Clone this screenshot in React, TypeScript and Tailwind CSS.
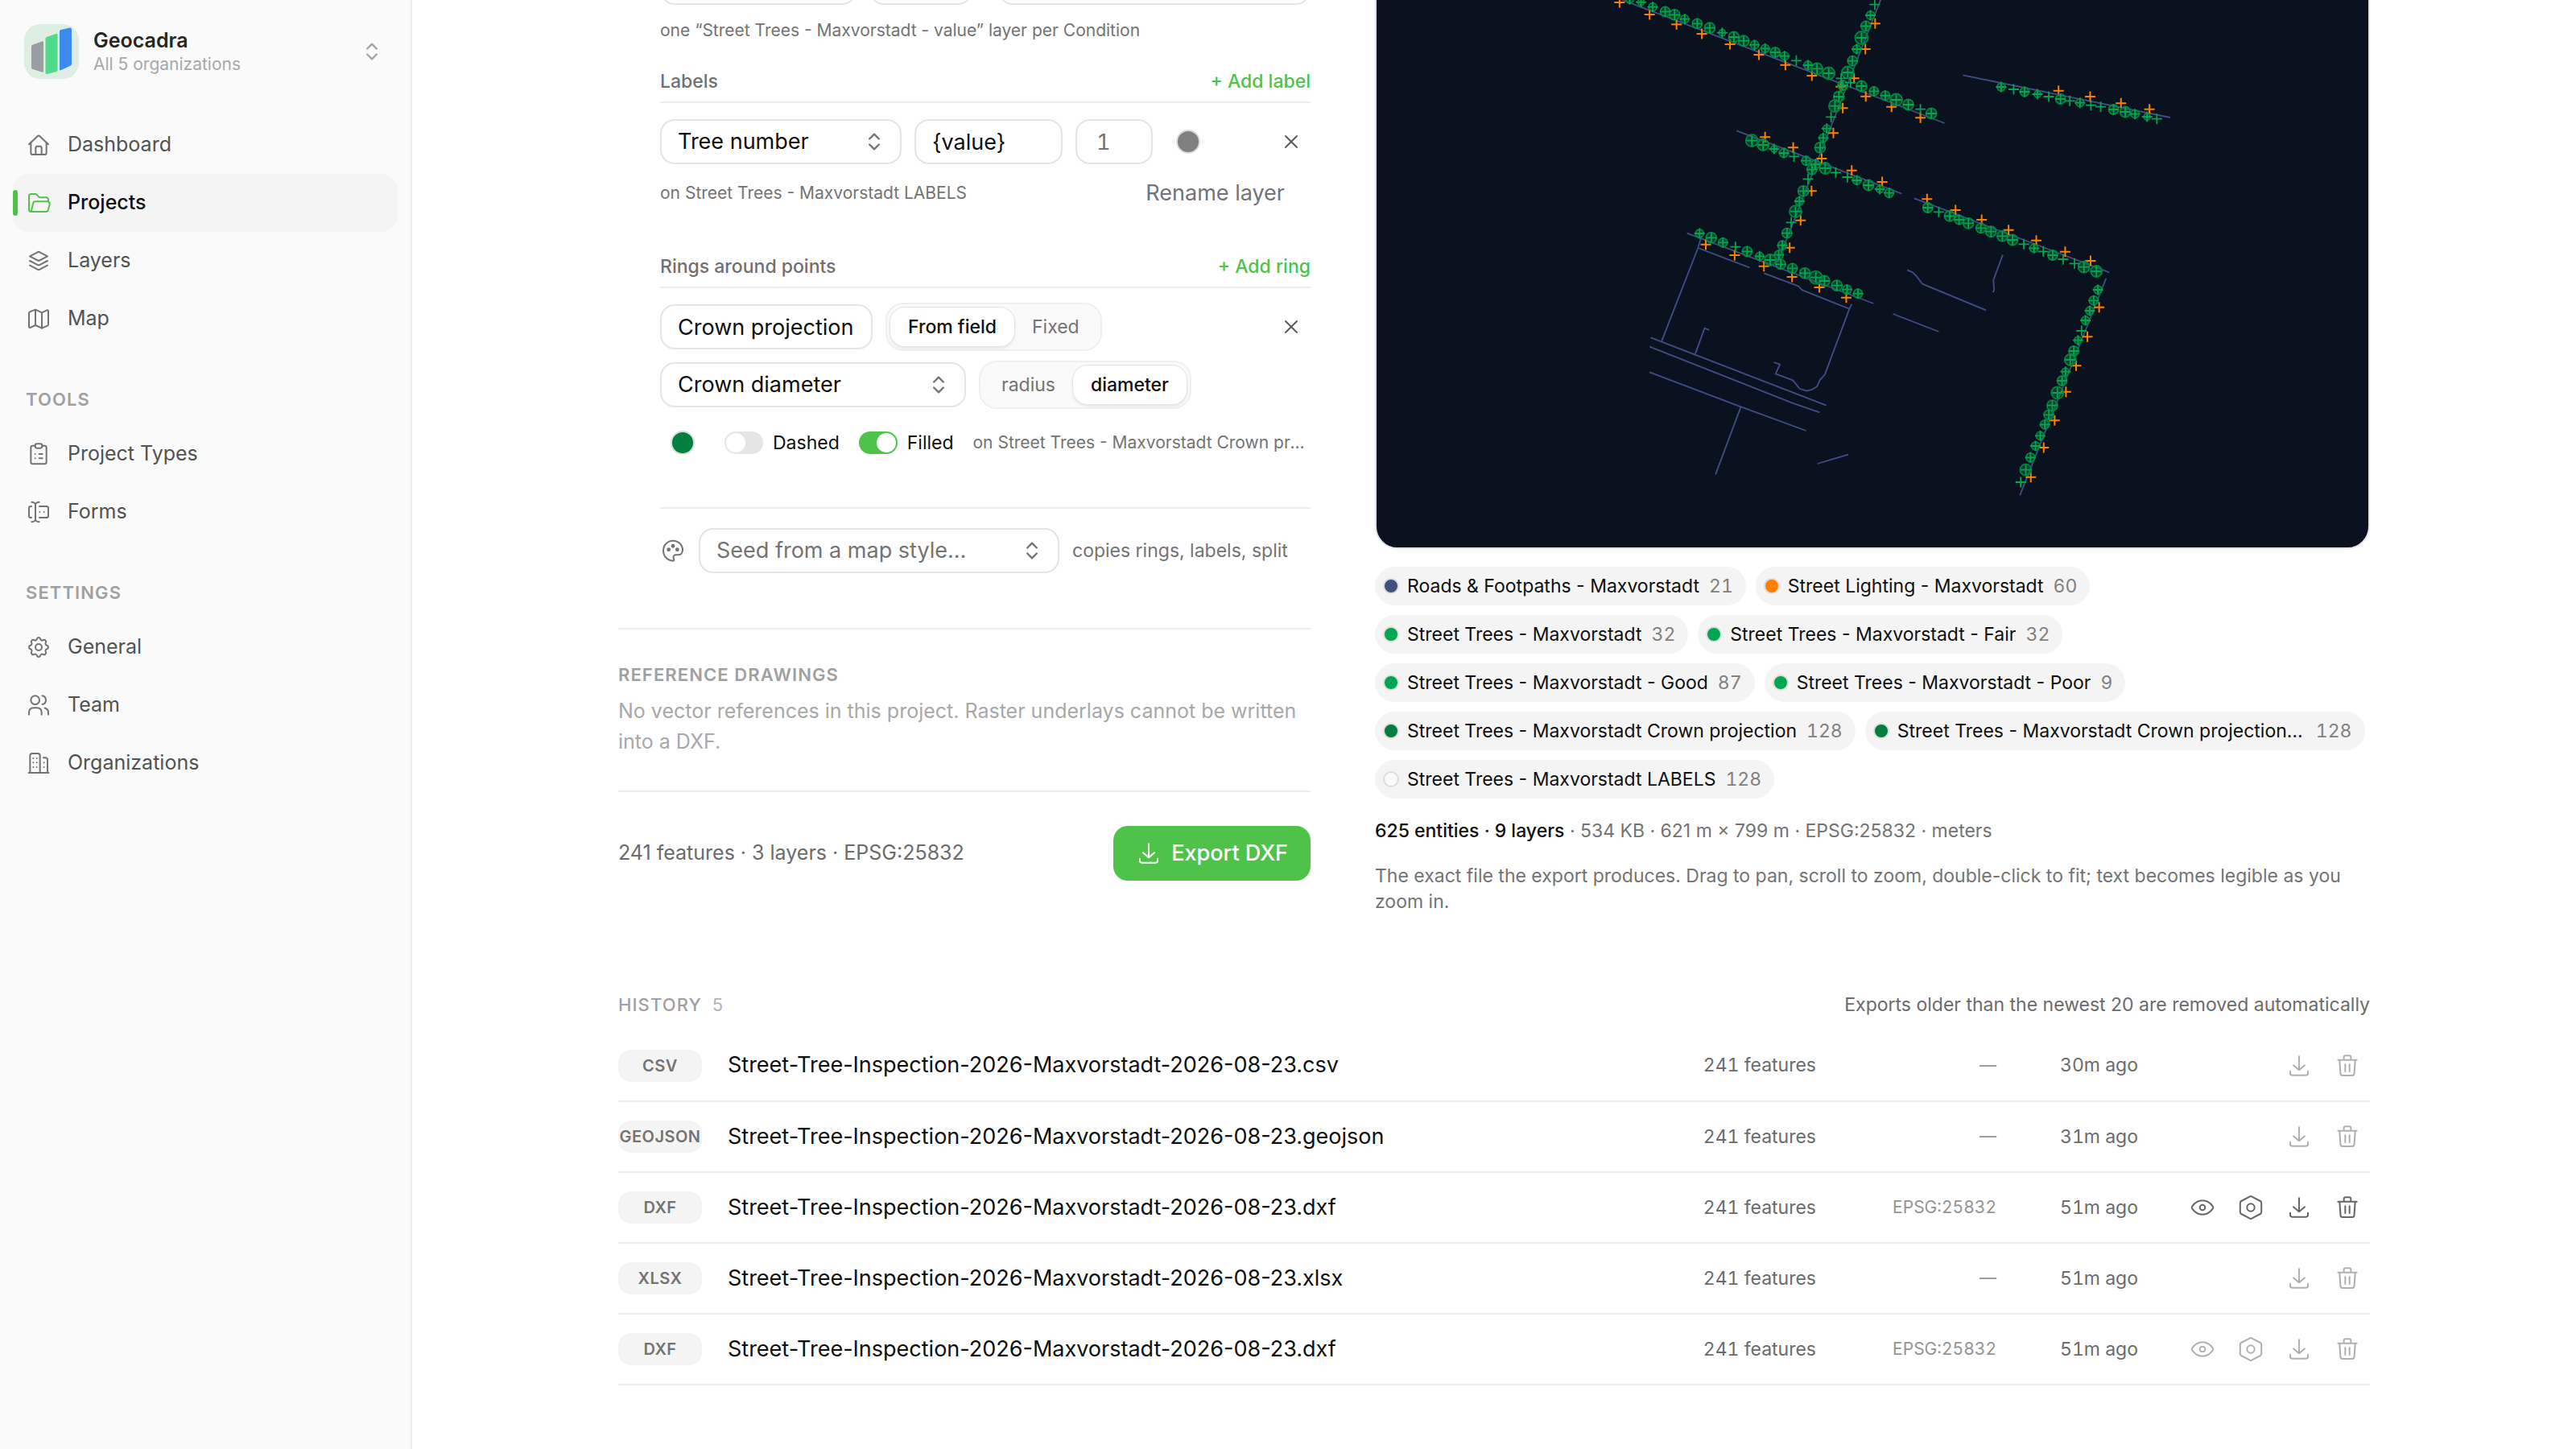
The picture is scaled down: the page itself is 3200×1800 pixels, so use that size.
import type { ReactNode } from "react";
import { ChevronsUpDown, X } from "lucide-react";
import { TbSettings } from "react-icons/tb";
import clsx from "clsx";

function Icon({
  children,
  className = "size-8",
}: {
  children: ReactNode;
  className?: string;
}) {
  return (
    <svg
      viewBox="0 0 24 24"
      fill="none"
      stroke="currentColor"
      strokeWidth={1.5}
      strokeLinecap="round"
      strokeLinejoin="round"
      className={clsx("shrink-0", className)}
      aria-hidden="true"
    >
      {children}
    </svg>
  );
}

const icons = {
  home: (
    <Icon>
      <path d="M3 11.5 10.9 3.9a1.6 1.6 0 0 1 2.2 0L21 11.5" />
      <path d="M4.75 10v9.25c0 1 .75 1.75 1.75 1.75h11c1 0 1.75-.75 1.75-1.75V10" />
      <path d="M9.25 21v-6c0-1 .75-1.75 1.75-1.75h2c1 0 1.75.75 1.75 1.75v6" />
    </Icon>
  ),
  folder: (
    <Icon>
      <path d="M21 10.75V9c0-1.1-.9-2-2-2h-5.5c-.6 0-1.1-.25-1.5-.7L10.3 4.5c-.4-.5-.9-.75-1.5-.75H5c-1.1 0-2 .9-2 2v12.5c0 1.1.9 2 2 2h13.9c.9 0 1.7-.6 1.95-1.5l1.4-5.5c.3-1.25-.6-2.5-1.95-2.5H8.9c-.9 0-1.7.6-1.95 1.5L5 20.2" />
    </Icon>
  ),
  layers: (
    <Icon>
      <path d="M12 3.5 20.25 7.75 12 12 3.75 7.75z" />
      <path d="M3.75 12 12 16.25 20.25 12" />
      <path d="M3.75 16.25 12 20.5l8.25-4.25" />
    </Icon>
  ),
  map: (
    <Icon>
      <path d="M3 7c0-.8.4-1.4 1.1-1.7L9 3.5l6 2.75 4.6-2.2c.7-.3 1.4.1 1.4.9V17c0 .8-.4 1.4-1.1 1.7L15 20.75 9 18l-4.6 2.2c-.7.3-1.4-.1-1.4-.9z" />
      <path d="M9 3.5V18M15 6.25v14.5" />
    </Icon>
  ),
  clipboard: (
    <Icon>
      <path d="M8.75 4.25H6.5c-1 0-1.75.75-1.75 1.75v13.5c0 1 .75 1.75 1.75 1.75h11c1 0 1.75-.75 1.75-1.75V6c0-1-.75-1.75-1.75-1.75h-2.25" />
      <rect x="8.75" y="2.5" width="6.5" height="4" rx="1.75" />
      <path d="M8.75 12h.01M8.75 16h.01M12.5 12h3M12.5 16h3" />
    </Icon>
  ),
  form: (
    <Icon>
      <path d="M9 5.5v13M5.5 2.75C7.5 2.75 9 3.9 9 5.5c0-1.6 1.5-2.75 3.5-2.75M5.5 21.25C7.5 21.25 9 20.1 9 18.5c0 1.6 1.5 2.75 3.5 2.75" />
      <path d="M5.25 6.75h-.5C3.75 6.75 3 7.5 3 8.5v7c0 1 .75 1.75 1.75 1.75h.5M12.75 6.75h6.5c1 0 1.75.75 1.75 1.75v7c0 1-.75 1.75-1.75 1.75h-6.5" />
      <path d="M13 12h.01M17 12h.01" />
    </Icon>
  ),
  team: (
    <Icon>
      <circle cx="8.75" cy="7.25" r="4" />
      <path d="M3 20.75V19c0-2.75 1.75-4.5 4.5-4.5h2.75c2.75 0 4.5 1.75 4.5 4.5v1.75" />
      <path d="M15.5 3.25a4.1 4.1 0 0 1 0 8M17.75 14.6c2 .5 3.25 2.1 3.25 4.4v1.75" />
    </Icon>
  ),
  building: (
    <Icon>
      <path d="M2.75 21h18.5M4 21V5c0-1.1.9-2 2-2h5.25c1.1 0 2 .9 2 2v16M16.5 7h1.75c1.1 0 2 .9 2 2v12" />
      <path d="M7 7.5h.01M10.25 7.5h.01M7 11.5h.01M10.25 11.5h.01M7 15.75h.01M10.25 15.75h.01M17 11.5h.01M17 15.75h.01" />
    </Icon>
  ),
  palette: (
    <Icon>
      <path d="M12 21.5c-5.1-.3-9-4.4-9-9.4C3 6.8 7 2.75 12 2.75s9 3.9 9 8.75c0 2.9-1.9 4.5-4.3 4.5h-1.9c-1.6 0-2.7 1.2-2.4 2.7l.5 1.6c.2.7-.2 1.2-.9 1.2z" />
      <circle cx="8" cy="11" r="1.1" fill="currentColor" />
      <circle cx="12" cy="7.75" r="1.1" fill="currentColor" />
      <circle cx="16" cy="11" r="1.1" fill="currentColor" />
    </Icon>
  ),
  download: (
    <Icon>
      <path d="M12 3.25V16M6.75 11.5 12 16l5.25-4.5" />
      <path d="M3.75 17v2c0 1 .75 1.75 1.75 1.75h13c1 0 1.75-.75 1.75-1.75v-2" />
    </Icon>
  ),
  trash: (
    <Icon>
      <path d="M3.25 6.5h17.5M8.75 6.25V4c0-.85.65-1.5 1.5-1.5h3.5c.85 0 1.5.65 1.5 1.5v2.25" />
      <path d="m4.75 6.75.85 12.5c.1 1 .9 1.75 1.9 1.75h9c1 0 1.8-.75 1.9-1.75l.85-12.5" />
      <path d="M10 10.75v6.5M14 10.75v6.5" />
    </Icon>
  ),
  eye: (
    <Icon>
      <path d="M21.6 11c.4.6.4 1.4 0 2-1.4 2-4.8 5.5-9.6 5.5S3.8 15 2.4 13c-.4-.6-.4-1.4 0-2C3.8 9 7.2 5.5 12 5.5s8.2 3.5 9.6 5.5z" />
      <circle cx="12" cy="12" r="2.5" />
    </Icon>
  ),
  hexagon: (
    <Icon>
      <path d="M11.2 1.7c.5-.25 1.1-.25 1.6 0l8.1 4.3c.65.35 1 .95 1 1.65v8.7c0 .7-.35 1.3-1 1.65l-8.1 4.3c-.5.25-1.1.25-1.6 0L3.1 18c-.65-.35-1-.95-1-1.65v-8.7c0-.7.35-1.3 1-1.65z" />
      <circle cx="12" cy="12" r="3.5" />
    </Icon>
  ),
};

const navGroups = [
  {
    title: "",
    items: [
      { label: "Dashboard", icon: icons.home },
      { label: "Projects", icon: icons.folder, active: true },
      { label: "Layers", icon: icons.layers },
      { label: "Map", icon: icons.map },
    ],
  },
  {
    title: "Tools",
    items: [
      { label: "Project Types", icon: icons.clipboard },
      { label: "Forms", icon: icons.form },
    ],
  },
  {
    title: "Settings",
    items: [
      {
        label: "General",
        icon: <TbSettings className="size-8 shrink-0 stroke-[1.5]" />,
      },
      { label: "Team", icon: icons.team },
      { label: "Organizations", icon: icons.building },
    ],
  },
];

function Logo() {
  return (
    <svg viewBox="0 0 68 68" className="size-[68px] shrink-0" aria-hidden="true">
      <rect width="68" height="68" rx="20" fill="#deeee2" />
      <path
        d="M11 25.5 22 21.5q2-.6 2 1.2v35.5q0 1.8-1.8 1.4L10.8 56Q9 55.5 9 54.2V27.2Q9 26 11 25.5z"
        fill="#9a9da1"
      />
      <path
        d="M28 16 39.500 12q2-.6 2 1.300V57q0 1.500-1.300 1.900L28.500 62Q26.500 62.500 26.500 60.500V18q0-1.500 1.500-2z"
        fill="#50db8a"
      />
      <path
        d="M45.500 7 56.500 4.500q2.500-.3 2.500 2v43q0 1.300-1.200 1.900L46 57q-2 .8-2-1.300V9q0-1.500 1.500-2z"
        fill="#3b8aee"
      />
    </svg>
  );
}

function Sidebar() {
  return (
    <aside className="w-[512px] shrink-0 border-r-2 border-[#ededed] bg-[#fafafa] px-4">
      <button
        type="button"
        className="flex w-full items-center gap-[18px] pt-[30px] pl-[14px] pr-[18px] text-left"
      >
        <Logo />
        <span className="min-w-0 flex-1">
          <span className="block text-[25px] leading-[32px] font-semibold text-[#262626]">
            Geocadra
          </span>
          <span className="block text-[21px] leading-[28px] text-[#a8a8a8]">
            All 5 organizations
          </span>
        </span>
        <ChevronsUpDown className="size-7 text-[#a3a3a3]" />
      </button>
      <nav className="mt-[46px]">
        {navGroups.map((group) => (
          <div key={group.title}>
            {group.title && (
              <h2 className="px-4 pt-12 pb-4 text-[22px] leading-[32px] font-semibold tracking-wider text-[#a0a0a0] uppercase">
                {group.title}
              </h2>
            )}
            {group.items.map((item) => {
              const active = "active" in item && item.active;
              return (
                <a
                  key={item.label}
                  href="#"
                  aria-current={active ? "page" : undefined}
                  className={clsx(
                    "relative flex h-[72px] items-center gap-5 rounded-[20px] px-4 text-[25px]",
                    active
                      ? "bg-[#f4f4f4] font-medium text-[#111]"
                      : "text-[#525252]",
                  )}
                >
                  {active && (
                    <span className="absolute top-5 left-0 h-8 w-1.5 rounded-full bg-[#4fc24a]" />
                  )}
                  <span className={active ? "text-[#4fc24a]" : "text-[#737373]"}>
                    {item.icon}
                  </span>
                  {item.label}
                </a>
              );
            })}
          </div>
        ))}
      </nav>
    </aside>
  );
}

const fieldClass =
  "h-14 w-full appearance-none rounded-[18px] border-2 border-[#e5e5e5] bg-white px-5 text-[27px] text-[#0f0f0f] outline-none placeholder:text-[#737373]";

function SelectField({
  label,
  value,
  muted,
  className,
}: {
  label: string;
  value: string;
  muted?: boolean;
  className?: string;
}) {
  return (
    <div className={clsx("relative", className)}>
      <select
        aria-label={label}
        className={clsx(fieldClass, muted && "text-[#737373]")}
      >
        <option>{value}</option>
      </select>
      <ChevronsUpDown className="pointer-events-none absolute top-[14px] right-5 size-7 text-[#737373]" />
    </div>
  );
}

function Segmented({
  name,
  options,
  value,
}: {
  name: string;
  options: string[];
  value: string;
}) {
  return (
    <div
      role="radiogroup"
      aria-label={name}
      className="flex h-[60px] rounded-[22px] border-2 border-[#efefef] bg-[#fafafa] p-1"
    >
      {options.map((option) => (
        <label
          key={option}
          className={clsx(
            "relative flex items-center rounded-[18px] px-[22px] text-[23px]",
            option === value
              ? "bg-white font-medium text-[#0f0f0f] shadow-[0_0_0_1px_#e5e5e5,0_2px_4px_rgba(0,0,0,0.12)]"
              : "text-[#737373]",
          )}
        >
          <input
            type="radio"
            name={name}
            defaultChecked={option === value}
            className="absolute inset-0 appearance-none"
          />
          {option}
        </label>
      ))}
    </div>
  );
}

function Toggle({ label, on }: { label: string; on?: boolean }) {
  return (
    <label className="flex items-center gap-3 text-[23px] text-[#0f0f0f]">
      <input
        type="checkbox"
        role="switch"
        defaultChecked={on}
        className="h-7 w-12 appearance-none rounded-full bg-[#e5e5e5] p-0.5 before:block before:size-6 before:rounded-full before:bg-white checked:bg-[#4fc24a] checked:before:ml-5"
      />
      {label}
    </label>
  );
}

function Swatch({ label, className }: { label: string; className: string }) {
  return (
    <button
      type="button"
      aria-label={label}
      className="flex size-14 shrink-0 items-center justify-center"
    >
      <span
        className={clsx(
          "size-[30px] rounded-full border-2 border-[#dcdcdc]",
          className,
        )}
      />
    </button>
  );
}

function RemoveButton({ label }: { label: string }) {
  return (
    <button
      type="button"
      aria-label={label}
      className="ml-auto flex size-12 items-center justify-center text-[#5c5c5c]"
    >
      <X className="size-7 stroke-[1.7]" />
    </button>
  );
}

function SubHeader({ title, action }: { title: string; action: string }) {
  return (
    <div className="flex h-[52px] items-center justify-between border-b-2 border-[#ededed] font-medium">
      <h3 className="text-[23px] text-[#707070]">{title}</h3>
      <button type="button" className="text-[23px] text-[#4fc24a]">
        {action}
      </button>
    </div>
  );
}

function ExportForm() {
  return (
    <form className="min-w-0" onSubmit={(e) => e.preventDefault()}>
      <div className="pl-[52px]">
        <div className="flex gap-4">
          <SelectField label="Split by" value="Condition" className="w-[244px]" />
          <input aria-label="Scale" className={clsx(fieldClass, "max-w-32")} />
          <SelectField label="Symbol" value="" className="ml-4 flex-1" />
        </div>
        <p className="mt-4 text-[21px] leading-[32px] text-[#737373]">
          one “Street Trees - Maxvorstadt - value” layer per Condition
        </p>

        <div className="mt-[22px]">
          <SubHeader title="Labels" action="+ Add label" />
          <div className="mt-[18px] flex h-[60px] items-center gap-4">
            <SelectField
              label="Label field"
              value="Tree number"
              className="w-[300px]"
            />
            <input
              aria-label="Label template"
              defaultValue="{value}"
              className={clsx(fieldClass, "max-w-[184px]")}
            />
            <input
              aria-label="Text height"
              placeholder="1"
              className={clsx(fieldClass, "max-w-24 pl-6 tabular-nums")}
            />
            <Swatch label="Label colour" className="bg-[#808080]" />
            <RemoveButton label="Remove label" />
          </div>
          <div className="mt-1.5 flex h-14 items-center justify-between pr-8">
            <p className="text-[21px] text-[#737373]">
              on Street Trees - Maxvorstadt LABELS
            </p>
            <button type="button" className="text-[27px] text-[#737373]">
              Rename layer
            </button>
          </div>
        </div>

        <div className="mt-[38px]">
          <SubHeader title="Rings around points" action="+ Add ring" />
          <div className="mt-[18px] flex items-center gap-4">
            <input
              aria-label="Ring name"
              defaultValue="Crown projection"
              className={clsx(fieldClass, "max-w-[264px]")}
            />
            <Segmented
              name="Ring size"
              options={["From field", "Fixed"]}
              value="From field"
            />
            <RemoveButton label="Remove ring" />
          </div>
          <div className="mt-3 flex items-center gap-4">
            <SelectField
              label="Ring field"
              value="Crown diameter"
              className="w-[380px]"
            />
            <Segmented
              name="Measure"
              options={["radius", "diameter"]}
              value="diameter"
            />
          </div>
          <div className="mt-3 flex h-[60px] items-center gap-6">
            <Swatch label="Ring colour" className="bg-[#007f3f]" />
            <Toggle label="Dashed" />
            <Toggle label="Filled" on />
            <p className="min-w-0 flex-1 truncate text-[21px] text-[#737373]">
              on Street Trees - Maxvorstadt Crown projection
            </p>
          </div>
        </div>

        <div className="mt-[50px] flex items-center gap-4 border-t-2 border-[#ededed] pt-6 text-[#737373]">
          {icons.palette}
          <SelectField
            label="Map style"
            value="Seed from a map style…"
            muted
            className="w-[448px]"
          />
          <p className="text-[23px]">copies rings, labels, split</p>
        </div>
      </div>

      <section className="mt-[68px] border-t-2 border-[#ededed] pt-10">
        <h3 className="text-[22px] leading-[32px] font-semibold tracking-wider text-[#a0a0a0] uppercase">
          Reference drawings
        </h3>
        <p className="mt-2.5 text-[25px] leading-[38px] text-[#a8a8a8]">
          No vector references in this project. Raster underlays cannot be
          written into a DXF.
        </p>
      </section>

      <div className="mt-[42px] flex items-center justify-between border-t-2 border-[#ededed] pt-[42px]">
        <p className="text-[25px] text-[#6b6b6b]">
          241 features · 3 layers · EPSG:25832
        </p>
        <button
          type="submit"
          className="flex h-[68px] items-center gap-3 rounded-[18px] bg-[#4fc24a] px-7 text-[27px] font-medium text-white"
        >
          {icons.download}
          Export DXF
        </button>
      </div>
    </form>
  );
}

// Drawing grid to viewBox units
const px = (x: number) => 250 + x / 2.063;
const py = (y: number) => y / 3;

const roads = [
  [[30, -48], [115, 0], [940, 459]],
  [[815, -144], [776, 0], [512, 978]],
  [[987, 280], [1518, 438]],
  [[407, 487], [830, 722]],
  [[862, 739], [1362, 1015]],
  [[280, 869], [758, 1131]],
  [[317, 880], [308, 924], [215, 1271]],
  [[308, 924], [440, 997]],
  [[477, 1018], [565, 1066], [575, 1081], [696, 1151]],
  [
    [702, 1133], [696, 1151], [633, 1396], [620, 1417], [613, 1441],
    [600, 1452], [587, 1457], [569, 1449], [551, 1417], [507, 1393],
    [518, 1358], [502, 1350],
  ],
  [[187, 1258], [637, 1511]],
  [[184, 1292], [550, 1502], [620, 1537]],
  [[184, 1387], [418, 1516], [585, 1605]],
  [[418, 1516], [353, 1768]],
  [[301, 1319], [325, 1223], [337, 1230]],
  [[614, 1728], [693, 1694]],
  [[844, 1006], [858, 1015], [868, 1029], [883, 1058], [1046, 1156]],
  [[808, 1170], [925, 1236]],
  [[1089, 950], [1065, 1044], [1067, 1080], [1064, 1090]],
  [[1354, 1037], [1133, 1846]],
];

// x, y, crown radius (0 when the crown was not measured)
const trees = [
  [133, -3, 5], [162, 8, 4], [192, 26, 5], [224, 43, 6], [248, 55, 6.5],
  [274, 71, 5], [306, 88, 6], [338, 104, 6.5], [370, 122, 4], [400, 138, 6.5],
  [425, 152, 6.5], [453, 167, 5], [480, 181, 5], [506, 195, 6], [530, 209, 5],
  [560, 226, 0], [590, 243, 5], [613, 256, 7], [643, 273, 7.5], [675, 292, 0],
  [699, 308, 0], [727, 321, 6.5], [759, 340, 5.5], [788, 356, 5.5],
  [816, 372, 7.5], [847, 390, 6.5], [878, 407, 0], [906, 423, 6.5],
  [761, 17, 0], [750, 57, 5], [738, 97, 6], [727, 141, 8], [715, 183, 5],
  [704, 227, 6], [692, 270, 7.5], [679, 318, 6], [669, 360, 6.5],
  [659, 395, 7.5], [649, 436, 0], [638, 479, 4.5], [629, 514, 5],
  [621, 550, 6.5], [609, 612, 5.5], [600, 632, 6], [590, 667, 0],
  [578, 712, 6.5], [568, 750, 5], [558, 788, 7.5], [547, 829, 0],
  [536, 869, 6], [524, 914, 5.5], [515, 950, 5.5], [1085, 324, 5],
  [1117, 333, 0], [1145, 342, 5.5], [1178, 351, 4], [1207, 360, 0],
  [1237, 369, 6], [1261, 376, 0], [1287, 383, 5], [1315, 392, 0],
  [1340, 398, 0], [1373, 408, 6], [1403, 417, 6.5], [1428, 425, 5],
  [1459, 435, 4], [1484, 443, 0], [446, 524, 7.5], [475, 540, 7],
  [503, 555, 4], [528, 570, 5.5], [554, 583, 0], [585, 599, 5.5],
  [634, 627, 7], [661, 643, 0], [691, 660, 0], [715, 672, 5], [745, 690, 6.5],
  [774, 705, 4.5], [798, 719, 5.5], [897, 774, 6], [925, 790, 0],
  [953, 805, 6.5], [977, 819, 5.5], [1001, 832, 6.5], [1033, 850, 6],
  [1059, 863, 6.5], [1088, 880, 6.5], [1114, 894, 6.5], [1143, 910, 0],
  [1169, 925, 5], [1193, 937, 0], [1217, 951, 6], [1244, 966, 0],
  [1273, 982, 0], [1297, 995, 7], [1329, 1011, 7], [312, 870, 5],
  [342, 886, 6.5], [372, 904, 5.5], [404, 920, 0], [434, 937, 6],
  [466, 955, 5], [493, 969, 7], [520, 985, 6], [550, 1000, 6],
  [582, 1018, 6.5], [610, 1034, 8], [632, 1047, 6.5], [664, 1064, 6.5],
  [690, 1079, 5.5], [718, 1094, 5.5], [1333, 1080, 5], [1322, 1120, 5.5],
  [1312, 1158, 5], [1301, 1194, 5], [1291, 1233, 0], [1282, 1268, 4.5],
  [1271, 1308, 6], [1262, 1341, 7], [1250, 1385, 4.5], [1241, 1419, 6],
  [1229, 1464, 7.5], [1216, 1511, 6.5], [1207, 1546, 6], [1197, 1582, 5.5],
  [1185, 1624, 5], [1173, 1662, 5], [1160, 1705, 5.5], [1148, 1751, 7],
  [1135, 1797, 0],
];

const lamps = [
  [107, 9], [184, 54], [253, 91], [318, 126], [390, 165], [464, 204],
  [532, 242], [600, 282], [674, 323], [738, 359], [804, 398], [878, 439],
  [762, 88], [737, 183], [708, 292], [679, 403], [655, 496], [625, 591],
  [599, 712], [571, 821], [543, 923], [1232, 338], [1313, 360], [1392, 385],
  [1465, 407], [480, 511], [552, 550], [702, 635], [780, 678], [895, 742],
  [968, 783], [1035, 819], [1104, 857], [1175, 896], [1249, 938],
  [1314, 972], [328, 911], [402, 951], [477, 992], [549, 1032], [619, 1071],
  [688, 1109], [1336, 1145], [1306, 1255], [1277, 1363], [1251, 1460],
  [1222, 1567], [1194, 1668], [1161, 1778],
];

const cross = (x: number, y: number) =>
  `M${px(x) - 6.5} ${py(y)}h13M${px(x)} ${py(y) - 6.5}v13`;

function DrawingPreview() {
  return (
    <svg
      viewBox="0 -48 1232 728"
      className="block h-auto w-full"
      role="img"
      aria-label="Drawing preview"
      fill="none"
      strokeWidth={2}
    >
      <g stroke="#3f4f86" strokeLinejoin="round" strokeWidth={1.8}>
        {roads.map((road, i) => (
          <polyline
            key={i}
            points={road.map(([x, y]) => `${px(x)},${py(y)}`).join(" ")}
          />
        ))}
      </g>
      <path stroke="#ff7f00" d={lamps.map(([x, y]) => cross(x, y)).join("")} />
      <g stroke="#00853f" fill="#00853f" fillOpacity={0.4} strokeWidth={1.8}>
        {trees
          .filter(([, , r]) => r > 0)
          .map(([x, y, r]) => (
            <circle key={`${x}-${y}`} cx={px(x)} cy={py(y)} r={r} />
          ))}
      </g>
      <path
        stroke="#00a650"
        strokeWidth={1.8}
        d={trees.map(([x, y]) => cross(x, y)).join("")}
      />
    </svg>
  );
}

const layers = [
  { name: "Roads & Footpaths - Maxvorstadt", count: 21, color: "bg-[#3f4f7f]" },
  { name: "Street Lighting - Maxvorstadt", count: 60, color: "bg-[#ff7f00]" },
  { name: "Street Trees - Maxvorstadt", count: 32, color: "bg-[#00a651]" },
  { name: "Street Trees - Maxvorstadt - Fair", count: 32, color: "bg-[#00a651]" },
  { name: "Street Trees - Maxvorstadt - Good", count: 87, color: "bg-[#00a651]" },
  { name: "Street Trees - Maxvorstadt - Poor", count: 9, color: "bg-[#00a651]" },
  {
    name: "Street Trees - Maxvorstadt Crown projection",
    count: 128,
    color: "bg-[#007f3f]",
  },
  {
    name: "Street Trees - Maxvorstadt Crown projection FILL",
    count: 128,
    color: "bg-[#007f3f]",
  },
  { name: "Street Trees - Maxvorstadt LABELS", count: 128, color: "bg-[#fafafa]" },
];

function Preview() {
  return (
    <section className="min-w-0">
      <div className="overflow-hidden rounded-[28px] border-2 border-[#e5e5e5] bg-[#0a121f]">
        <DrawingPreview />
      </div>
      <ul className="mt-[22px] flex flex-wrap gap-3 text-[23px]">
        {layers.map((layer) => (
          <li
            key={layer.name}
            className="flex h-12 items-center rounded-full bg-[#f4f4f4] pr-4 pl-2.5"
          >
            <span
              className={clsx(
                "size-5 shrink-0 rounded-full border-2 border-[#dcdcdc]",
                layer.color,
              )}
            />
            <span className="ml-2.5 max-w-[508px] truncate text-[#0f0f0f]">
              {layer.name}
            </span>
            <span className="ml-3 text-[#808080] tabular-nums">
              {layer.count}
            </span>
          </li>
        ))}
      </ul>
      <p className="mt-6 text-[23px] leading-[32px] text-[#737373]">
        <span className="font-medium text-[#0f0f0f]">
          625 entities · 9 layers
        </span>{" "}
        · 534 KB · 621 m × 799 m · EPSG:25832 · meters
      </p>
      <p className="mt-6 text-[23px] leading-[32px] text-[#737373]">
        The exact file the export produces. Drag to pan, scroll to zoom,
        double-click to fit; text becomes legible as you zoom in.
      </p>
    </section>
  );
}

const exportsList = [
  { type: "CSV", ext: "csv", crs: "", age: "30m ago" },
  { type: "GEOJSON", ext: "geojson", crs: "", age: "31m ago" },
  { type: "DXF", ext: "dxf", crs: "EPSG:25832", age: "51m ago", hovered: true },
  { type: "XLSX", ext: "xlsx", crs: "", age: "51m ago" },
  { type: "DXF", ext: "dxf", crs: "EPSG:25832", age: "51m ago" },
];

function IconButton({ label, children }: { label: string; children: ReactNode }) {
  return (
    <button
      type="button"
      aria-label={label}
      className="flex size-14 items-center justify-center"
    >
      {children}
    </button>
  );
}

function History() {
  return (
    <section className="mt-24">
      <div className="flex items-center justify-between leading-[32px]">
        <h2 className="text-[22px] font-medium tracking-wider text-[#a0a0a0] uppercase">
          History <span className="ml-1.5 font-normal text-[#b3b3b3]">5</span>
        </h2>
        <p className="text-[23px] text-[#6b6b6b]">
          Exports older than the newest 20 are removed automatically
        </p>
      </div>
      <table className="mt-4 w-full table-fixed">
        <colgroup>
          <col className="w-[136px]" />
          <col />
          <col className="w-[240px]" />
          <col className="w-[224px]" />
          <col className="w-[176px]" />
          <col className="w-[288px]" />
        </colgroup>
        <tbody>
          {exportsList.map((row, i) => (
            <tr
              key={i}
              className="h-[88px] border-b-2 border-[#ededed] text-right text-[23px] text-[#6b6b6b]"
            >
              <td>
                <span className="flex h-10 w-[104px] items-center justify-center rounded-2xl bg-[#f4f4f4] text-[20px] font-semibold tracking-wide text-[#737373]">
                  {row.type}
                </span>
              </td>
              <td className="truncate text-left text-[27px] text-[#0f0f0f]">
                Street-Tree-Inspection-2026-Maxvorstadt-2026-08-23.{row.ext}
              </td>
              <td className="tabular-nums">241 features</td>
              <td className="text-[21px] text-[#949494] tabular-nums">
                {row.crs || "—"}
              </td>
              <td className="tabular-nums">{row.age}</td>
              <td>
                <div
                  className={clsx(
                    "flex justify-end gap-1",
                    row.hovered ? "text-[#666]" : "text-[#b0b0b0]",
                  )}
                >
                  {row.crs && (
                    <>
                      <IconButton label="Preview">{icons.eye}</IconButton>
                      <IconButton label="Export settings">
                        {icons.hexagon}
                      </IconButton>
                    </>
                  )}
                  <IconButton label="Download">{icons.download}</IconButton>
                  <IconButton label="Delete">{icons.trash}</IconButton>
                </div>
              </td>
            </tr>
          ))}
        </tbody>
      </table>
    </section>
  );
}

export default function App() {
  return (
    <div className="flex min-h-screen bg-white font-['Inter',sans-serif]">
      <Sidebar />
      <main className="min-w-0 flex-1 overflow-hidden px-16 pb-20">
        <div className="mx-auto max-w-[2176px]">
          <div className="-mt-[50px] grid grid-cols-[minmax(0,860fr)_minmax(0,1236fr)] items-start gap-20">
            <ExportForm />
            <Preview />
          </div>
          <History />
        </div>
      </main>
    </div>
  );
}
